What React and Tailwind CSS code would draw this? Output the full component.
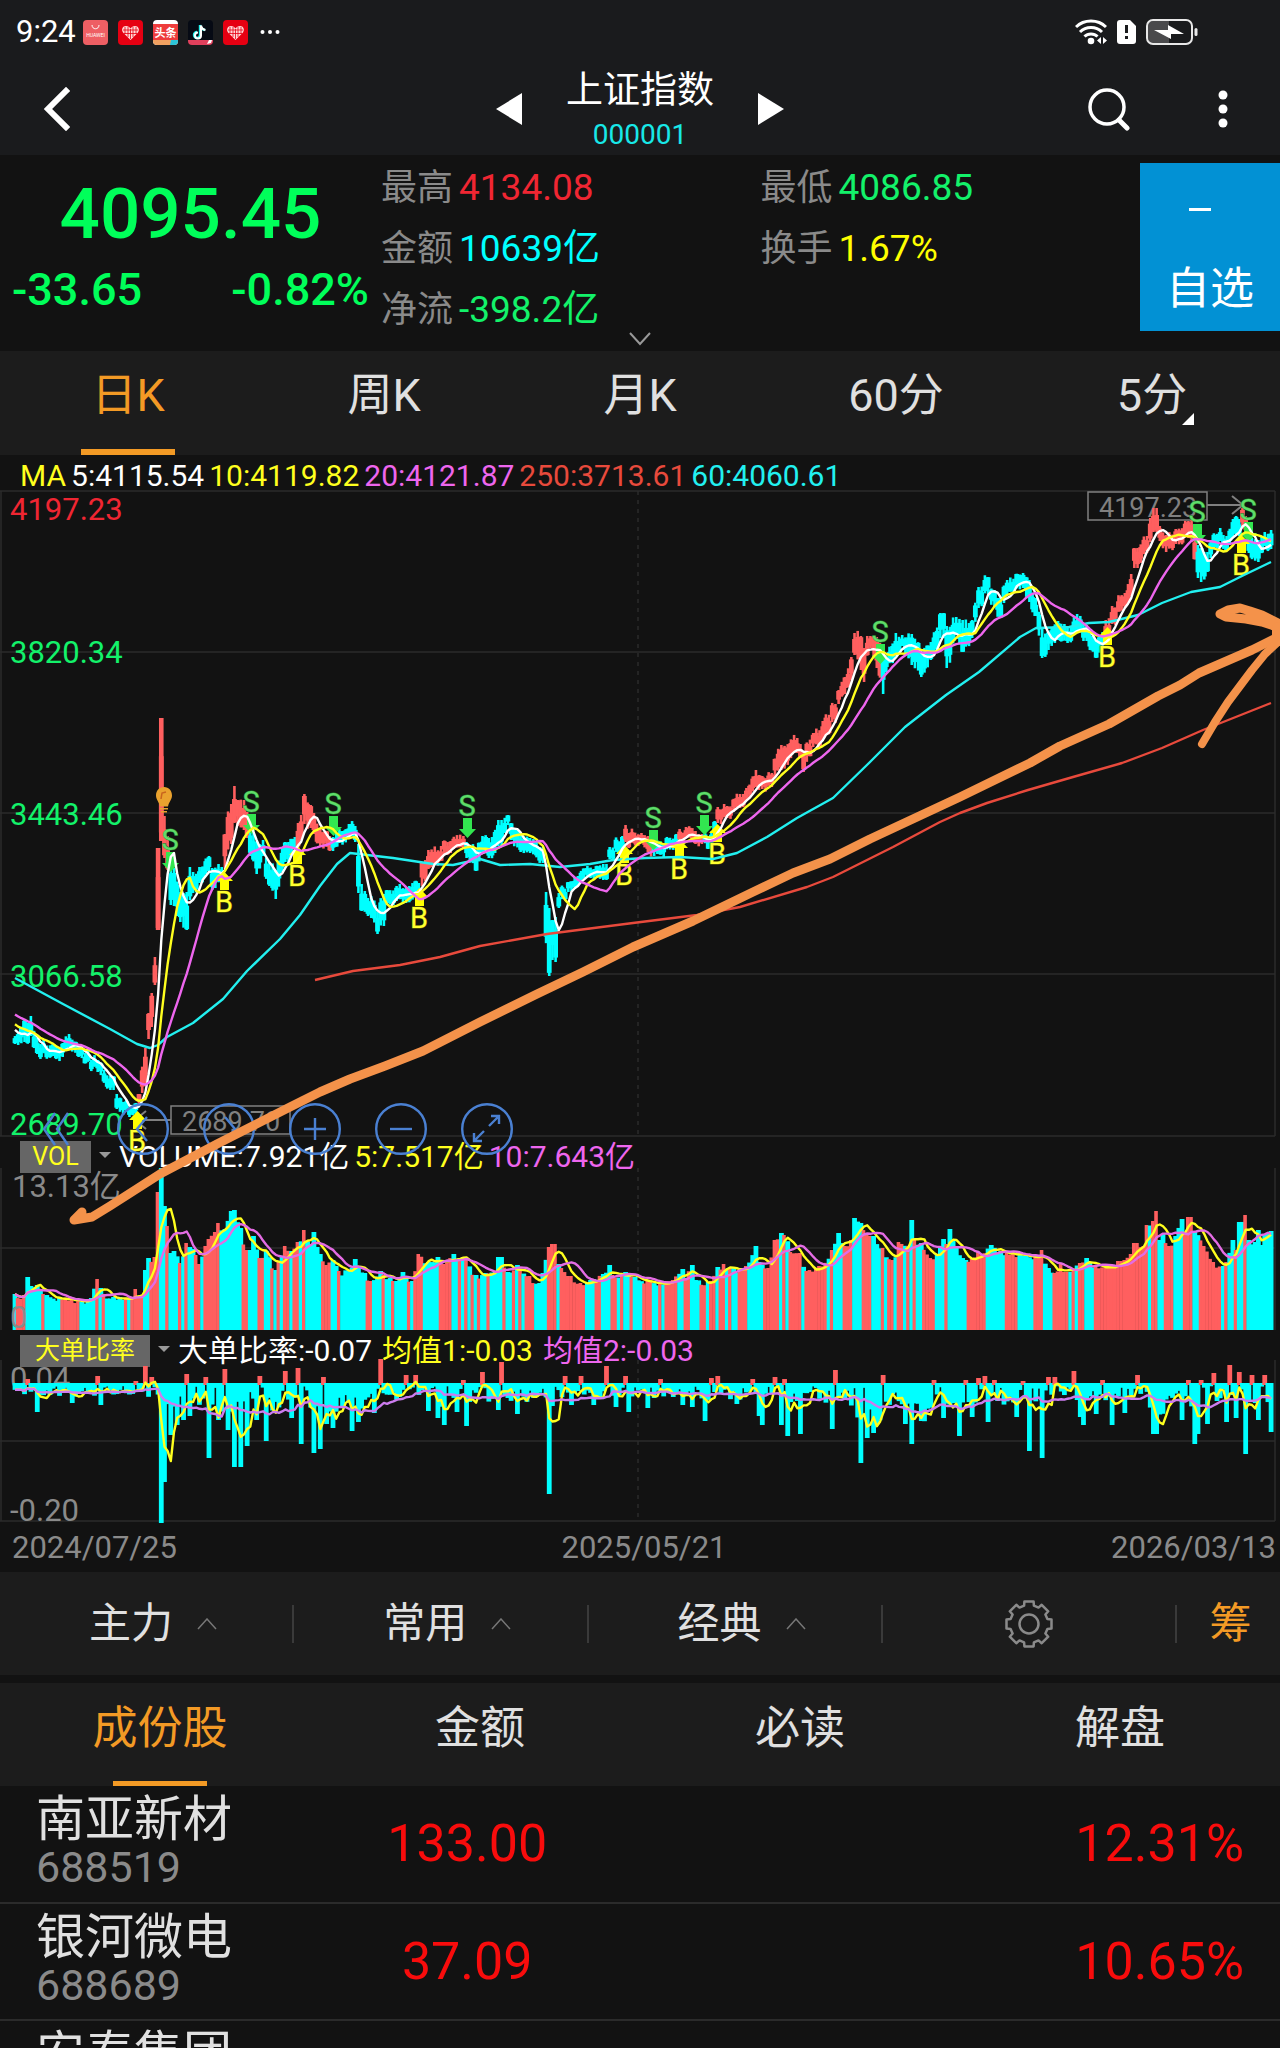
const UP = '#ff5f5f';
const DOWN = '#00ffff';
const STEP = 3.18;
const FIRST_X = 15;
const COUNT = 396;

// [x, high, low, colour] key candles, the days in between are interpolated
const CANDLES = [
  [14, 1036, 1044, 0], [26, 1020, 1042, 0], [30, 1016, 1036, 0], [36, 1038, 1054, 0], [52, 1044, 1056, 0], [63, 1043, 1057, 0],
  [68, 1034, 1047, 0], [80, 1047, 1057, 0], [97, 1060, 1072, 0], [112, 1076, 1090, 0], [118, 1094, 1109, 0], [130, 1107, 1117, 0],
  [136, 1103, 1114, 0], [140, 1094, 1106, 1], [144, 1048, 1086, 1], [148, 1013, 1039, 1], [152, 993, 1027, 1], [155, 957, 985, 1],
  [158, 848, 930, 1], [161, 718, 841, 1], [164, 816, 858, 1], [168, 836, 870, 1], [171, 862, 905, 0], [175, 868, 906, 0],
  [180, 892, 922, 0], [186, 892, 930, 0], [189, 867, 900, 0], [193, 872, 893, 0], [200, 867, 883, 0], [209, 856, 872, 0],
  [213, 868, 890, 0], [222, 867, 883, 0], [225, 834, 869, 1], [230, 804, 844, 1], [235, 786, 823, 1], [239, 800, 826, 1],
  [243, 800, 830, 1], [247, 812, 838, 1], [251, 828, 856, 0], [257, 842, 874, 0], [263, 840, 856, 0], [268, 862, 886, 0],
  [275, 870, 899, 0], [282, 848, 872, 0], [287, 842, 862, 0], [294, 837, 849, 0], [298, 823, 848, 1], [302, 815, 840, 1],
  [305, 794, 824, 1], [310, 805, 828, 1], [315, 813, 834, 1], [320, 828, 846, 1], [329, 836, 851, 1], [333, 837, 851, 0],
  [340, 829, 843, 0], [348, 824, 837, 0], [354, 826, 842, 0], [357, 844, 893, 0], [360, 884, 911, 0], [367, 898, 916, 0],
  [372, 896, 918, 0], [378, 912, 934, 0], [383, 894, 926, 0], [388, 890, 904, 0], [397, 886, 901, 0], [406, 887, 903, 0],
  [418, 883, 900, 0], [422, 862, 886, 1], [428, 850, 869, 1], [440, 846, 861, 1], [450, 841, 853, 1], [464, 836, 849, 1],
  [468, 842, 858, 0], [476, 850, 871, 0], [482, 836, 853, 0], [490, 838, 858, 0], [500, 820, 846, 0], [507, 815, 825, 0],
  [512, 823, 840, 0], [520, 834, 852, 0], [530, 838, 853, 0], [542, 847, 863, 0], [548, 908, 976, 0], [552, 920, 960, 0],
  [555, 917, 962, 0], [560, 893, 908, 0], [567, 882, 892, 0], [577, 876, 886, 0], [587, 866, 876, 0], [595, 869, 880, 0],
  [605, 864, 880, 0], [610, 847, 859, 0], [622, 836, 853, 0], [625, 825, 842, 1], [630, 833, 848, 1], [642, 833, 843, 1],
  [649, 836, 852, 1], [653, 842, 856, 0], [663, 844, 857, 0], [675, 834, 845, 0], [680, 829, 841, 1], [687, 827, 838, 1],
  [697, 831, 844, 1], [703, 834, 844, 1], [707, 838, 849, 0], [715, 821, 835, 0], [718, 807, 823, 1], [727, 806, 818, 1],
  [740, 794, 808, 1], [747, 788, 800, 1], [756, 770, 787, 1], [762, 776, 789, 1], [771, 773, 787, 1], [781, 745, 770, 1],
  [797, 738, 753, 1], [801, 744, 758, 1], [805, 751, 772, 1], [813, 733, 747, 1], [824, 721, 741, 1], [834, 704, 723, 1],
  [840, 690, 704, 1], [846, 677, 694, 1], [852, 657, 680, 1], [855, 633, 655, 1], [860, 636, 670, 1], [864, 648, 682, 1],
  [869, 636, 648, 1], [878, 637, 668, 1], [882, 655, 694, 0], [887, 658, 672, 0], [896, 633, 656, 0], [903, 635, 646, 0],
  [911, 634, 665, 0], [922, 650, 677, 0], [932, 642, 660, 0], [942, 613, 638, 0], [948, 626, 668, 0], [956, 617, 634, 0],
  [962, 620, 652, 0], [973, 620, 638, 0], [979, 587, 608, 0], [987, 577, 594, 0], [993, 590, 606, 0], [1001, 597, 618, 0],
  [1007, 580, 594, 0], [1022, 573, 588, 0], [1028, 580, 602, 0], [1036, 598, 616, 0], [1042, 628, 658, 0], [1048, 632, 650, 0],
  [1058, 621, 640, 0], [1069, 628, 643, 0], [1077, 614, 631, 0], [1085, 625, 641, 0], [1095, 640, 658, 0], [1103, 632, 646, 0],
  [1107, 620, 640, 1], [1113, 606, 624, 1], [1124, 593, 608, 1], [1132, 574, 596, 1], [1136, 548, 568, 1], [1146, 536, 553, 1],
  [1150, 518, 542, 1], [1155, 508, 532, 1], [1160, 526, 541, 1], [1167, 535, 552, 1], [1175, 529, 544, 1], [1187, 521, 538, 1],
  [1193, 520, 542, 1], [1197, 545, 578, 0], [1202, 548, 582, 0], [1207, 552, 572, 0], [1211, 540, 558, 0], [1220, 528, 541, 0],
  [1228, 536, 551, 0], [1234, 519, 538, 0], [1240, 519, 536, 0], [1243, 508, 528, 1], [1247, 516, 533, 1], [1250, 532, 553, 0],
  [1258, 540, 562, 0], [1264, 532, 546, 0], [1270, 530, 549, 0],
];

const MA60 = '15,978 63,1004 110,1029 137,1044 150,1048 158,1045 167,1037 193,1023 223,999 247,971 280,939 300,915 320,886 337,864 350,853 393,858 433,864 453,865 480,859 500,865 530,864 560,867 590,864 613,860 645,858 680,857 713,859 737,853 767,837 797,818 833,798 869,763 905,727 946,695 979,672 1020,637 1036,628 1069,627 1089,623 1109,622 1138,615 1162,603 1191,592 1220,587 1244,575 1271,562';
const MA250 = '315,980 353,971 400,965 440,957 480,946 547,934 633,923 697,915 740,907 807,887 833,877 893,847 940,822 960,813 987,803 1028,790 1073,777 1122,763 1162,748 1203,730 1271,703';

// [x, y of the bar's top]
const VOLUME = [
  [14, 1294], [24, 1295], [27, 1277], [30, 1286], [38, 1285], [45, 1294], [60, 1297], [80, 1299], [92, 1298], [97, 1279], [101, 1288],
  [105, 1294], [120, 1297], [133, 1298], [137, 1289], [141, 1295], [145, 1270], [148, 1258], [154, 1257], [158, 1192], [161, 1168],
  [165, 1206], [168, 1226], [171, 1253], [175, 1251], [180, 1263], [187, 1243], [192, 1249], [195, 1255], [200, 1264], [205, 1246],
  [209, 1239], [214, 1232], [218, 1223], [224, 1229], [230, 1211], [235, 1210], [240, 1228], [246, 1250], [250, 1250], [254, 1236],
  [260, 1258], [267, 1251], [275, 1270], [280, 1262], [285, 1246], [292, 1251], [298, 1242], [305, 1230], [310, 1246], [314, 1232],
  [320, 1254], [326, 1265], [333, 1260], [340, 1271], [348, 1270], [356, 1259], [365, 1273], [372, 1281], [382, 1271], [395, 1281],
  [404, 1272], [412, 1281], [420, 1254], [428, 1262], [437, 1257], [444, 1264], [454, 1254], [465, 1257], [475, 1275], [485, 1273],
  [495, 1272], [500, 1257], [508, 1272], [516, 1265], [530, 1276], [541, 1283], [544, 1273], [548, 1247], [554, 1244], [560, 1264],
  [570, 1276], [580, 1283], [590, 1280], [604, 1274], [609, 1265], [614, 1275], [626, 1272], [635, 1277], [650, 1281], [672, 1280],
  [682, 1269], [686, 1278], [692, 1265], [697, 1280], [708, 1282], [717, 1267], [724, 1264], [735, 1268], [747, 1266], [756, 1246],
  [760, 1262], [768, 1268], [776, 1240], [782, 1233], [786, 1235], [792, 1252], [800, 1253], [806, 1271], [820, 1266], [832, 1250],
  [839, 1233], [844, 1246], [851, 1240], [855, 1218], [861, 1223], [866, 1234], [874, 1236], [882, 1248], [893, 1260], [900, 1242],
  [908, 1246], [912, 1220], [916, 1240], [922, 1243], [930, 1258], [938, 1254], [943, 1239], [948, 1244], [951, 1229], [956, 1248],
  [966, 1260], [980, 1252], [990, 1245], [1000, 1251], [1020, 1253], [1036, 1256], [1041, 1250], [1048, 1268], [1055, 1273],
  [1060, 1263], [1066, 1272], [1080, 1263], [1088, 1258], [1096, 1265], [1105, 1268], [1120, 1261], [1126, 1260], [1130, 1254],
  [1136, 1243], [1144, 1246], [1148, 1225], [1152, 1221], [1156, 1211], [1160, 1240], [1164, 1234], [1170, 1246], [1176, 1236],
  [1181, 1219], [1185, 1234], [1190, 1217], [1196, 1232], [1205, 1246], [1215, 1262], [1222, 1266], [1227, 1262], [1232, 1240],
  [1237, 1250], [1240, 1222], [1245, 1215], [1249, 1240], [1255, 1242], [1258, 1230], [1262, 1245], [1266, 1234], [1271, 1231],
];

// ranges where every volume bar is red
const RED_RUNS = [
  [17, 22], [42, 46], [62, 67], [132, 143], [151, 159], [257, 264], [283, 291], [323, 330], [416, 424], [445, 453], [528, 534], [561, 583],
  [666, 679], [709, 717], [737, 748], [765, 777], [790, 798], [808, 829], [845, 854], [863, 869], [927, 933], [967, 986], [1005, 1013],
  [1053, 1059], [1099, 1148], [1185, 1192], [1199, 1220],
];

const RATIO_SPIKES = [
  [36, 1412], [72, 1403], [100, 1405], [161, 1523], [164, 1482], [170, 1435], [177, 1425], [184, 1420], [190, 1416], [209, 1458],
  [219, 1420], [228, 1430], [234, 1467], [241, 1467], [247, 1446], [256, 1420], [267, 1441], [292, 1418], [302, 1444], [314, 1453],
  [321, 1449], [328, 1424], [334, 1428], [353, 1431], [359, 1422], [375, 1413], [427, 1411], [437, 1418], [443, 1425], [456, 1412],
  [468, 1426], [484, 1414], [497, 1410], [516, 1414], [548, 1494], [552, 1406], [571, 1405], [595, 1405], [615, 1407], [628, 1412],
  [647, 1408], [682, 1405], [692, 1407], [705, 1421], [737, 1404], [758, 1416], [762, 1425], [782, 1425], [788, 1436], [801, 1434],
  [833, 1429], [861, 1463], [867, 1438], [875, 1433], [904, 1424], [912, 1444], [921, 1421], [944, 1418], [960, 1436], [971, 1417],
  [989, 1422], [1018, 1417], [1031, 1451], [1041, 1458], [1079, 1417], [1085, 1425], [1095, 1414], [1111, 1425], [1124, 1413],
  [1153, 1434], [1157, 1434], [1182, 1420], [1194, 1444], [1198, 1434], [1207, 1424], [1226, 1422], [1236, 1418], [1245, 1454],
  [1258, 1420], [1270, 1432],
  [27, 1379], [97, 1376], [136, 1381], [145, 1366], [152, 1377], [187, 1374], [206, 1377], [225, 1369], [260, 1376], [286, 1371],
  [298, 1368], [324, 1377], [382, 1359], [407, 1375], [417, 1375], [462, 1380], [481, 1372], [500, 1362], [565, 1376], [580, 1376],
  [605, 1366], [625, 1376], [660, 1379], [712, 1378], [718, 1376], [752, 1379], [775, 1377], [785, 1379], [836, 1370], [884, 1375],
  [935, 1380], [967, 1380], [980, 1378], [986, 1376], [996, 1380], [1022, 1381], [1047, 1377], [1056, 1377], [1073, 1371],
  [1104, 1380], [1137, 1375], [1188, 1380], [1202, 1380], [1213, 1373], [1229, 1365], [1239, 1372], [1252, 1375], [1265, 1375],
];

// usual depth of the ratio bars from this x on
const RATIO_DEPTH = [[0, 11], [165, 28], [215, 40], [252, 26], [330, 30], [370, 15], [420, 22], [470, 16], [560, 12], [700, 14], [770, 22], [855, 46], [885, 20], [910, 36], [935, 20], [1045, 15], [1150, 36], [1165, 14], [1190, 28], [1205, 18]];

const SIGNALS = [
  ['S', 170, 840], ['S', 251, 802], ['S', 333, 804], ['S', 467, 806], ['S', 653, 818], ['S', 704, 803], ['S', 880, 632], ['S', 1197, 512], ['S', 1248, 510],
  ['B', 224, 902], ['B', 297, 876], ['B', 419, 918], ['B', 137, 1141], ['B', 624, 875], ['B', 679, 869], ['B', 717, 854], ['B', 1107, 657], ['B', 1241, 565],
];

function hash(n) {
  const s = Math.sin(n * 127.1 + 11.7) * 43758.5453;
  return s - Math.floor(s);
}

function lerpAt(keys, x, col) {
  let i = 0;
  while (i < keys.length - 2 && keys[i + 1][0] < x) i++;
  const a = keys[i];
  const b = keys[i + 1];
  const t = Math.min(1, Math.max(0, (x - a[0]) / (b[0] - a[0])));
  return a[col] + (b[col] - a[col]) * t;
}

function nearest(keys, x) {
  return keys.reduce((best, k) => (Math.abs(k[0] - x) < Math.abs(best[0] - x) ? k : best));
}

function average(values, n, skip = 0) {
  const out = [];
  for (let i = skip; i < values.length; i++) {
    const part = values.slice(Math.max(0, i - n + 1), i + 1);
    out.push(part.reduce((a, b) => a + b, 0) / part.length);
  }
  return out;
}

const xs = Array.from({ length: COUNT }, (_, i) => FIRST_X + i * STEP);

const candles = xs.map((x, i) => {
  const key = nearest(CANDLES, x);
  const near = Math.abs(key[0] - x) < 1.7;
  const high = near ? key[1] : lerpAt(CANDLES, x, 1);
  const low = near ? key[2] : lerpAt(CANDLES, x, 2);
  const shift = near ? 0 : (hash(i) - 0.5) * 9;
  const body = Math.max(5, (low - high) * 0.62);
  const top = high + shift + (low - high - body) * hash(i + 500);
  return { x, high: high + shift, low: low + shift, top, body, wick: low - high > 70 ? 4.6 : 2.6, color: key[3] ? UP : DOWN };
});

const warmup = Array.from({ length: 20 }, (_, i) => 994 + i * 1.9);
const mids = [...warmup, ...candles.map((c) => c.top + c.body / 2)];

const volumes = xs.map((x, i) => {
  const key = nearest(VOLUME, x);
  const y = Math.abs(key[0] - x) < 1.7 ? key[1] : lerpAt(VOLUME, x, 1) + hash(i + 90) * 5;
  const red = RED_RUNS.some(([a, b]) => x >= a && x <= b) || hash(i + 31) > 0.66;
  return { x, y, color: red ? UP : DOWN };
});
volumes.filter((v) => v.x > 159.5 && v.x < 167).forEach((v) => { v.color = DOWN; });

const ratios = xs.map((x, i) => {
  const key = nearest(RATIO_SPIKES, x);
  if (Math.abs(key[0] - x) <= STEP / 2) return { x, y: key[1] };
  const depth = RATIO_DEPTH.filter((d) => d[0] <= x).pop()[1];
  return { x, y: 1383 + 3 + depth * hash(i + 211) };
});

const line = (values) => values.map((y, i) => `${(FIRST_X + i * STEP).toFixed(1)},${y.toFixed(1)}`).join(' ');

function Line({ points, color, width = 2.4 }) {
  return <polyline points={points} fill="none" stroke={color} strokeWidth={width} strokeLinejoin="round" />;
}

function Frame({ top, mids: rows, bottom }) {
  return (
    <g stroke="#2b2b2b" strokeWidth="1.5" fill="none">
      <path d={`M1 ${top}V${bottom}M1275 ${top}V${bottom}`} />
      {rows.map((y) => <path key={y} d={`M0 ${y}H1275`} />)}
      <path d={`M638 ${top}V${bottom}`} strokeDasharray="4 5" />
    </g>
  );
}

function Signal({ kind, x, y }) {
  const sell = kind === 'S';
  return (
    <g>
      {sell
        ? <path d={`M${x - 4} ${y + 12}h9v11h4l-8.500 9l-8.500 -9h4z`} fill="#32e650" />
        : <path d={`M${x - 4} ${y - 12}h9v-9h4l-8.500 -9l-8.500 9h4z`} fill="#ffff00" />}
      <text x={x} y={y + 10} textAnchor="middle" fontSize="29" fill={sell ? '#5fdc6a' : '#ffff30'} stroke={sell ? '#1e7a2a' : '#6a6a00'} strokeWidth="1" paintOrder="stroke">{kind}</text>
    </g>
  );
}

function PriceChart() {
  return (
    <svg className="block w-full h-auto overflow-visible" viewBox="0 491 1280 645" role="img" aria-label="日K线图">
      <Frame top={491} bottom={1136} mids={[491, 652, 813, 974, 1136]} />
      <g fontSize="31" fill="#13f26a">
        <text x="10" y="520" fill="#f02632">4197.23</text>
        <text x="10" y="663">3820.34</text>
        <text x="10" y="825">3443.46</text>
        <text x="10" y="987">3066.58</text>
        <text x="10" y="1135">2689.70</text>
      </g>
      <g fill="none" stroke="#808080" strokeWidth="1.500">
        <rect x="1088" y="492" width="119" height="28" />
        <path d="M1207 505H1243M1232 496L1243 505L1232 514" strokeWidth="2" />
        <rect x="171" y="1106" width="119" height="28" />
        <path d="M171 1120H135M146 1111L135 1120L146 1129" strokeWidth="2" />
      </g>
      <g fontSize="27" fill="#808080">
        <text x="1099" y="517">4197.23</text>
        <text x="182" y="1131">2689.70</text>
      </g>
      {candles.map((c) => (
        <g key={c.x} fill={c.color}>
          <rect x={c.x - c.wick / 2} y={c.high} width={c.wick} height={c.low - c.high} />
          <rect x={c.x - 2.4} y={c.top} width="4.800" height={c.body} />
        </g>
      ))}
      {SIGNALS.map(([kind, x, y]) => <Signal key={kind + x} kind={kind} x={x} y={y} />)}
      <Line points={MA250} color="#e84a3c" />
      <Line points={MA60} color="#22f0f0" />
      <Line points={line(average(mids, 5, 20))} color="#ffffff" />
      <Line points={line(average(mids, 10, 20))} color="#ffff1e" />
      <Line points={line(average(mids, 20, 20))} color="#ee66ee" />
      <path d="M164 787c-5 0-8 4-8 8.500c0 4 3 6 4 11h8c1-5 4-7 4-11c0-4.500-3-8.500-8-8.500zM160 808h8v1.500h-8zM161 811h6v1.500h-6z" fill="#eaa22e" />
      <path d="M161 799l1-6l4-1" stroke="#c8641e" strokeWidth="1.500" fill="none" />
    </svg>
  );
}

function VolumeChart() {
  const values = volumes.map((v) => v.y);
  return (
    <svg className="block w-full h-auto overflow-visible" viewBox="0 1175 1280 155" role="img" aria-label="成交量">
      <Frame top={1168} bottom={1330} mids={[1248]} />
      {volumes.map((v) => <rect key={v.x} x={v.x - 2.4} y={v.y} width={v.color === DOWN ? 4.8 : 3.6} height={1330 - v.y} fill={v.color} />)}
      <Line points={line(average(values, 5))} color="#ffff1e" />
      <Line points={line(average(values, 10))} color="#e46ce4" />
      <g fontSize="31" fill="#8a8a8a">
        <text x="12" y="1197">13.13亿</text>
        <text x="10" y="1328">0</text>
      </g>
    </svg>
  );
}

function RatioChart() {
  const values = ratios.map((r) => r.y);
  return (
    <svg className="block w-full h-auto overflow-visible" viewBox="0 1369 1280 154" role="img" aria-label="大单比率">
      <Frame top={1360} bottom={1521} mids={[1441, 1521]} />
      <g fontSize="31" fill="#8a8a8a">
        <text x="10" y="1389">0.04</text>
        <text x="10" y="1521">-0.20</text>
      </g>
      {ratios.map((r) => (
        r.y > 1383
          ? <rect key={r.x} x={r.x - 2.4} y="1383" width="4.800" height={r.y - 1383} fill={DOWN} />
          : <rect key={r.x} x={r.x - 2.4} y={r.y} width="4.800" height={1385 - r.y} fill={UP} />
      ))}
      <Line points={line(average(values, 4))} color="#ffff1e" />
      <Line points={line(average(values, 20))} color="#cc7cee" />
    </svg>
  );
}

function TrendDrawing() {
  return (
    <svg className="absolute inset-0 z-20 w-full h-full pointer-events-none" viewBox="0 455 1280 1117" preserveAspectRatio="none" aria-hidden="true">
      <g fill="none" stroke="#f4924a" strokeLinecap="round" strokeLinejoin="round">
        <path strokeWidth="9" d="M82 1212L74 1220L92 1217L110 1206L160 1174L217 1144L290 1107L320 1092L350 1079L385 1066L423 1051L480 1022L537 994L583 972L633 947L693 921L753 892L793 873L830 859L870 839L960 797L999 778L1030 763L1060 746L1109 724L1158 696L1180 685L1199 673L1252 650L1280 636" />
        <path strokeWidth="8" d="M1280 640L1265 654L1252 670L1240 686L1228 702L1215 722L1202 744" />
        <path strokeWidth="9" d="M1280 624L1262 615L1250 611L1240 608L1228 610L1220 614L1226 617L1246 619L1262 622L1280 628" />
        <path strokeWidth="12" d="M1278 628V640" />
      </g>
    </svg>
  );
}

const ZOOM_TOOLS = [
  { label: '最左', circle: false, d: 'M24 10L13 26L24 42M37 10L26 26L37 42' },
  { label: '左移', circle: true, d: 'M30 14L20 26L30 38' },
  { label: '右移', circle: true, d: 'M22 14L32 26L22 38' },
  { label: '放大', circle: true, d: 'M15 26H37M26 15V37' },
  { label: '缩小', circle: true, d: 'M15 26H37' },
  { label: '全屏', circle: true, d: 'M28 23L38 13M30 13H38V21M23 28L13 38M13 30V38H21' },
];

function ZoomTools() {
  return (
    <div className="absolute -bottom-[19px] left-[31px] flex gap-[34px]">
      {ZOOM_TOOLS.map((t) => (
        <button key={t.label} type="button" aria-label={t.label} className="size-[52px]">
          <svg viewBox="0 0 52 52" fill="none" stroke="#4a80d2" strokeWidth="2.400">
            {t.circle && <circle cx="26" cy="26" r="24.800" />}
            <path d={t.d} />
          </svg>
        </button>
      ))}
    </div>
  );
}

function Legend({ name, width, gap, items }) {
  return (
    <div className="flex items-start h-[39px] pl-5 text-[30px] leading-[42px] whitespace-nowrap">
      <button type="button" className={`${width} mt-[5px] h-8 bg-[#666] text-[25px] leading-8 text-[#ffff1e]`}>{name}</button>
      <svg className="w-3 h-2 mx-2 mt-4" viewBox="0 0 12 8"><path d="M0 0H12L6 6z" fill="#999" /></svg>
      <div className={`flex ${gap}`}>
        {items.map(([text, color]) => <span key={text} className={color}>{text}</span>)}
      </div>
    </div>
  );
}

function HeartIcon() {
  return (
    <svg className="size-[25px]" viewBox="0 0 25 25">
      <rect width="25" height="25" rx="4" fill="#e60012" />
      <path d="M12.500 20L5 12.500C3 9.500 4.500 6 8 6c2 0 3.500 1 4.500 2.500C13.500 7 15 6 17 6c3.500 0 5 3.500 3 6.500z" fill="#ffd8d8" />
      <path d="M7 7v7M10 7v10M12.500 9v10M15 7v10M18 7v7M5 10h15M6 13.500h13" stroke="#e60012" strokeWidth=".8" />
    </svg>
  );
}

function StatusBar() {
  return (
    <div className="flex items-center h-12 pt-4 pl-4 pr-[82px]">
      <span className="text-[31px] leading-8 w-[67px] text-white">9:24</span>
      <div className="flex items-center gap-[10px]">
        <svg className="size-[25px]" viewBox="0 0 25 25">
          <rect width="25" height="25" rx="4" fill="#ee5f64" />
          <path d="M9 5c0 5 7 5 7 0" stroke="#fff" fill="none" />
          <text x="12.500" y="17" textAnchor="middle" fontSize="5" fill="#fff">HUAWEI</text>
        </svg>
        <HeartIcon />
        <svg className="size-[25px]" viewBox="0 0 25 25">
          <rect width="25" height="25" rx="4" fill="#fff" />
          <rect y="4" width="25" height="16" fill="#ee3c3c" />
          <path d="M0 20H25V21Q25 25 21 25H4Q0 25 0 21z" fill="#f0a060" />
          <path d="M18 20h7v1q0 4-4 4h-4z" fill="#2cc4d8" />
          <text x="12.500" y="17" textAnchor="middle" fontSize="11" fontWeight="700" fill="#fff">头条</text>
        </svg>
        <svg className="size-[25px]" viewBox="0 0 25 25">
          <rect width="25" height="25" rx="4" fill="#060a14" />
          <path d="M12 5v10a3 3 0 1 1-3-3M12 5c.5 3 2 4.500 5 5" stroke="#25f4ee" strokeWidth="2.400" fill="none" />
          <path d="M13 5.500v10a3 3 0 1 1-3-3M13 5.500c.5 3 2 4 4.500 4.500" stroke="#fff" strokeWidth="2" fill="none" />
          <path d="M0 20H25V21Q25 25 21 25H4Q0 25 0 21z" fill="#e0405c" />
          <path d="M19 24l2-4h3l-1 3z" fill="#fff" />
        </svg>
        <HeartIcon />
        <svg className="w-5 h-2 ml-0.5" viewBox="0 0 20 8" fill="#fff"><circle cx="2.500" cy="4" r="2" /><circle cx="10" cy="4" r="2" /><circle cx="17.500" cy="4" r="2" /></svg>
      </div>
      <div className="flex items-center gap-[10px] ml-auto">
        <svg className="w-8 h-[26px]" viewBox="0 0 32 26" fill="none" stroke="#fff" strokeWidth="3">
          <path d="M1 8C9 0 23 0 31 8M5 13C11 7 21 7 27 13M9.500 17.500C13 14 19 14 22.500 17.500" />
          <circle cx="16" cy="22" r="3.300" fill="#fff" stroke="none" />
          <path d="M26 18v7l-4-3.500zM28 18v7l4-3.500z" fill="#fff" stroke="none" />
        </svg>
        <svg className="w-[19px] h-6" viewBox="0 0 19 24">
          <path d="M3 0H13L19 6V21Q19 24 16 24H3Q0 24 0 21V3Q0 0 3 0z" fill="#fff" />
          <path d="M9.500 5v8M9.500 16v3" stroke="#1a1b1d" strokeWidth="3" />
        </svg>
        <svg className="w-[52px] h-[26px]" viewBox="0 0 52 26">
          <path d="M7 2H23V24H7Q2 24 2 19V7Q2 2 7 2z" fill="#4a4a4c" />
          <rect x="1" y="1" width="45" height="24" rx="6" fill="none" stroke="#e8e8e8" strokeWidth="2" />
          <rect x="48.500" y="9" width="3" height="8" rx="1.500" fill="#e8e8e8" />
          <path d="M8 11L22 11L22 6L38 15L25 15L25 20z" fill="#fff" />
        </svg>
      </div>
    </div>
  );
}

function NavBar() {
  return (
    <nav className="grid grid-cols-[1fr_auto_1fr] items-center h-[107px] pt-[14px] px-[42px]">
      <button type="button" aria-label="返回" className="w-7">
        <svg viewBox="0 0 28 44"><path d="M24 4L6 22L24 40" fill="none" stroke="#fff" strokeWidth="6" strokeLinecap="square" /></svg>
      </button>
      <div className="flex items-center gap-11">
        <button type="button" aria-label="上一个"><svg className="w-[26px] h-8" viewBox="0 0 26 32"><path d="M26 0V32L0 16z" fill="#fff" /></svg></button>
        <div className="pt-1.5 text-center">
          <h1 className="text-[37px] leading-[46px] text-white">上证指数</h1>
          <p className="text-[28px] leading-[42px] text-[#18e8e8]">000001</p>
        </div>
        <button type="button" aria-label="下一个"><svg className="w-[26px] h-8" viewBox="0 0 26 32"><path d="M0 0V32L26 16z" fill="#fff" /></svg></button>
      </div>
      <div className="flex items-center justify-end gap-[78px]">
        <button type="button" aria-label="搜索">
          <svg className="w-[42px] h-11" viewBox="0 0 42 44" fill="none" stroke="#fff" strokeWidth="3.500"><circle cx="19" cy="20" r="17" /><path d="M31 33L39 41" strokeWidth="5" strokeLinecap="round" /></svg>
        </button>
        <button type="button" aria-label="更多" className="flex justify-center w-[30px]">
          <svg className="w-[10px] h-10" viewBox="0 0 10 40" fill="#fff"><circle cx="5" cy="6" r="4.500" /><circle cx="5" cy="20" r="4.500" /><circle cx="5" cy="34" r="4.500" /></svg>
        </button>
      </div>
    </nav>
  );
}

const STATS = [
  ['最高', '4134.08', 'text-[#f02632]'],
  ['最低', '4086.85', 'text-[#13f26a]'],
  ['金额', '10639亿', 'text-[#00ffff]'],
  ['换手', '1.67%', 'text-[#ffff00]'],
  ['净流', '-398.2亿', 'text-[#13f26a]'],
];

function Quote() {
  return (
    <section className="relative flex h-[196px]">
      <div className="w-[381px] text-[#00ff5a] font-medium">
        <p className="pt-4 text-center text-[71px] leading-[86px]">4095.45</p>
        <div className="flex justify-between pt-1.5 pl-3 pr-3 text-[45px] leading-[53px]">
          <span>-33.65</span>
          <span>-0.82%</span>
        </div>
      </div>
      <dl className="flex-1 grid grid-cols-2 auto-rows-[61px] pt-0.5">
        {STATS.map(([label, value, color]) => (
          <div key={label} className="flex items-center gap-[6px]">
            <dt className="text-[36px] text-[#8a8a8a]">{label}</dt>
            <dd className={`text-[37px] ${color}`}>{value}</dd>
          </div>
        ))}
      </dl>
      <button type="button" className="w-[140px] h-[168px] mt-2 flex flex-col items-center bg-[#0291d4] text-white">
        <span className="self-start ml-[49px] mt-[45px] w-[22px] h-[3px] bg-white" />
        <span className="mt-[46px] text-[44px] leading-[64px]">自选</span>
      </button>
      <svg className="absolute bottom-1 left-1/2 -translate-x-1/2 w-6 h-4" viewBox="0 0 24 16"><path d="M2 2L12 13L22 2" fill="none" stroke="#999" strokeWidth="2" /></svg>
    </section>
  );
}

const PERIODS = ['日K', '周K', '月K', '60分', '5分'];

function PeriodTabs() {
  return (
    <div role="tablist" className="grid grid-cols-5 h-[104px] bg-[#1c1c1c]">
      {PERIODS.map((p, i) => (
        <button key={p} role="tab" aria-selected={i === 0} className={`relative pb-[14px] text-[45px] ${i === 0 ? 'text-[#f39a25]' : 'text-[#e0e0e0]'}`}>
          {p}
          {i === 0 && <span className="absolute bottom-0 left-1/2 -translate-x-1/2 w-[94px] h-[6px] bg-[#f39a25]" />}
          {i === 4 && <svg className="absolute right-[86px] bottom-[30px] size-3" viewBox="0 0 12 12"><path d="M12 0V12H0z" fill="#fff" /></svg>}
        </button>
      ))}
    </div>
  );
}

function Charts() {
  return (
    <section className="relative">
      <div className="flex gap-[5px] h-9 pl-5 text-[30px] leading-[41px] whitespace-nowrap">
        <span className="text-[#ffff1e]">MA</span>
        <span className="text-white">5:4115.54</span>
        <span className="text-[#ffff1e]">10:4119.82</span>
        <span className="text-[#ee66ee]">20:4121.87</span>
        <span className="text-[#e84a3c]">250:3713.61</span>
        <span className="text-[#22f0f0]">60:4060.61</span>
      </div>
      <div className="relative z-10">
        <PriceChart />
        <ZoomTools />
      </div>
      <Legend name="VOL" width="w-[71px]" gap="gap-[5px]" items={[['VOLUME:7.921亿', 'text-white'], ['5:7.517亿', 'text-[#ffff1e]'], ['10:7.643亿', 'text-[#ee66ee]']]} />
      <VolumeChart />
      <Legend name="大单比率" width="w-[130px]" gap="gap-[10px]" items={[['大单比率:-0.07', 'text-white'], ['均值1:-0.03', 'text-[#ffff1e]'], ['均值2:-0.03', 'text-[#ee66ee]']]} />
      <RatioChart />
      <div className="flex justify-between pl-3 pr-1 text-[31px] leading-[49px] text-[#8a8a8a]">
        <time>2024/07/25</time>
        <time>2025/05/21</time>
        <time>2026/03/13</time>
      </div>
      <TrendDrawing />
    </section>
  );
}

function Gear() {
  const teeth = [];
  for (let i = 0; i < 8; i++) {
    const a = (i * Math.PI) / 4 - Math.PI / 2;
    [[-0.26, 19], [-0.2, 23], [0.2, 23], [0.26, 19]].forEach(([d, r]) => teeth.push(`${(24 + r * Math.cos(a + d)).toFixed(1)},${(24 + r * Math.sin(a + d)).toFixed(1)}`));
  }
  return (
    <svg className="size-12" viewBox="0 0 48 48" fill="none" stroke="#8a8a8a" strokeWidth="2.500" strokeLinejoin="round">
      <polygon points={teeth.join(' ')} />
      <circle cx="24" cy="24" r="9.500" />
    </svg>
  );
}

function Toolbar() {
  return (
    <div className="grid grid-cols-[repeat(4,1fr)_103px] items-center h-[103px] bg-[#1c1c1c] text-[42px] text-[#e0e0e0]">
      {['主力', '常用', '经典'].map((t) => (
        <button key={t} type="button" className="flex items-center justify-center gap-6 h-[38px] pl-[14px] border-r-2 border-[#3a3a3a]">
          {t}
          <svg className="w-5 h-3" viewBox="0 0 20 12"><path d="M1 11L10 1L19 11" fill="none" stroke="#777" strokeWidth="1.500" /></svg>
        </button>
      ))}
      <button type="button" aria-label="设置" className="flex items-center justify-center h-[38px] border-r-2 border-[#3a3a3a]"><Gear /></button>
      <button type="button" className="pl-1 text-[#f39a25]">筹</button>
    </div>
  );
}

function StockTabs() {
  return (
    <div role="tablist" className="grid grid-cols-4 h-[103px] mt-2 bg-[#1c1c1c]">
      {['成份股', '金额', '必读', '解盘'].map((t, i) => (
        <button key={t} role="tab" aria-selected={i === 0} className={`relative pb-3 text-[45px] ${i === 0 ? 'text-[#f39a25]' : 'text-[#e0e0e0]'}`}>
          {t}
          {i === 0 && <span className="absolute bottom-0 left-1/2 -translate-x-1/2 w-[94px] h-[5px] bg-[#f39a25]" />}
        </button>
      ))}
    </div>
  );
}

const STOCKS = [
  { name: '南亚新材', code: '688519', price: '133.00', change: '12.31%' },
  { name: '银河微电', code: '688689', price: '37.09', change: '10.65%' },
  { name: '安泰集团', code: '', price: '', change: '' },
];

function StockTable() {
  return (
    <table className="w-full table-fixed">
      <tbody>
        {STOCKS.map((s) => (
          <tr key={s.name} className="h-[117px] border-b-2 border-[#2b2b2b] text-[52px] text-[#f80c0c] align-top">
            <th scope="row" className="w-[25%] pl-9 pt-2 text-left font-normal">
              <div className="text-[49px] leading-[52px] text-[#e0e0e0]">{s.name}</div>
              <div className="text-[43px] leading-[42px] text-[#8a8a8a]">{s.code}</div>
            </th>
            <td className="w-[23%] leading-[115px] text-center">{s.price}</td>
            <td className="leading-[115px] text-right pr-9">{s.change}</td>
          </tr>
        ))}
      </tbody>
    </table>
  );
}

export default function App() {
  return (
    <div className="flex flex-col h-screen overflow-hidden bg-[#121212] font-['Roboto','Noto_Sans_CJK_SC',sans-serif] *:shrink-0">
      <header className="bg-[#1a1b1d]">
        <StatusBar />
        <NavBar />
      </header>
      <Quote />
      <PeriodTabs />
      <Charts />
      <Toolbar />
      <StockTabs />
      <StockTable />
    </div>
  );
}
